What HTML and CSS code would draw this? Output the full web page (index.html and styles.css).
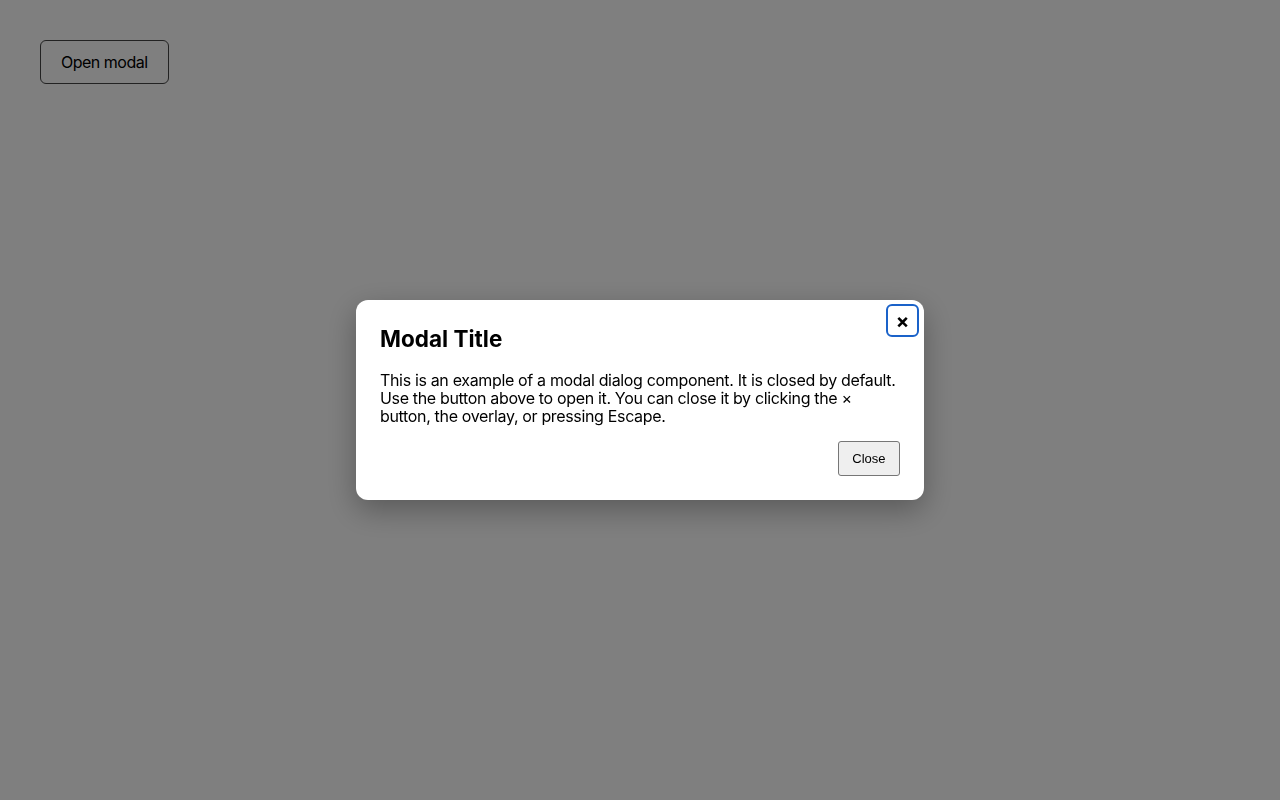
FILE: index.html
```html
<!DOCTYPE html>
<html lang="en">
	<head>
		<meta charset="UTF-8" />
		<meta name="viewport" content="width=device-width, initial-scale=1.0" />
		<title>Modal dialog</title>
		<link rel="stylesheet" href="styles.css">
	</head>
	<body>
		<main class="page">
			<button class="open-btn" id="open-modal">Open modal</button>
		</main>

		<!-- Overlay + dialog, open in the screenshot -->
		<div class="overlay" id="overlay">
			<div class="modal" role="dialog" aria-modal="true" aria-labelledby="modal-title">
				<button class="modal-x" aria-label="Close">&times;</button>
				<h2 class="modal-title" id="modal-title">Modal Title</h2>
				<p class="modal-text">
					This is an example of a modal dialog component. It is closed by default.
					Use the button above to open it. You can close it by clicking the &times;
					button, the overlay, or pressing Escape.
				</p>
				<div class="modal-actions">
					<button class="modal-close">Close</button>
				</div>
			</div>
		</div>
	</body>
</html>
```

FILE: styles.css
```css
body {
	box-sizing: border-box;
	margin: 0;
	font-family: "Inter", "Liberation Sans", sans-serif;
	background-color: #ffffff;
	color: #000000;
}

.page {
	padding: 40px;
}

.open-btn {
	font-family: "Inter", "Liberation Sans", sans-serif;
	font-size: 16px;
	line-height: 20px;
	letter-spacing: -0.5px;
	padding: 11px 20px;
	background: #ffffff;
	color: #000000;
	border: 1px solid #444444;
	border-radius: 6px;
	cursor: pointer;
}

.overlay {
	position: fixed;
	inset: 0;
	display: flex;
	align-items: center;
	justify-content: center;
	background-color: rgba(0, 0, 0, 0.5);
}

.modal {
	position: relative;
	box-sizing: border-box;
	width: 568px;
	padding: 24px;
	background-color: #ffffff;
	border-radius: 12px;
	box-shadow: 0 10px 30px rgba(0, 0, 0, 0.3);
}

.modal-x {
	position: absolute;
	top: 4px;
	right: 5px;
	width: 33px;
	height: 33px;
	padding: 0;
	display: flex;
	align-items: center;
	justify-content: center;
	font-family: "Inter", "Liberation Sans", sans-serif;
	font-size: 20px;
	font-weight: 700;
	line-height: 1;
	color: #000000;
	background: #ffffff;
	border: 2px solid #1a62c9;
	border-radius: 6px;
	cursor: pointer;
}

.modal-title {
	margin: 0 0 17px;
	font-size: 22.5px;
	font-weight: 700;
	line-height: 30px;
}

.modal-text {
	margin: 0;
	font-size: 16px;
	line-height: 18px;
	letter-spacing: -0.34px;
}

.modal-actions {
	display: flex;
	justify-content: flex-end;
	margin-top: 16px;
}

.modal-close {
	box-sizing: border-box;
	height: 35px;
	font-family: "Liberation Sans", sans-serif;
	font-size: 13px;
	padding: 0 13.5px;
	background-color: #efefef;
	color: #000000;
	border: 1px solid #767676;
	border-radius: 3px;
	cursor: pointer;
}
```
